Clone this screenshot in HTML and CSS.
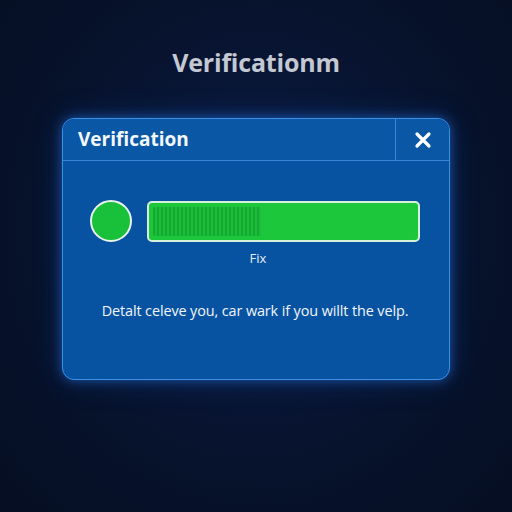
FILE: index.html
```html
<!DOCTYPE html>
<html lang="en">

<head>
  <meta charset="UTF-8">
  <meta name="viewport" content="width=device-width, initial-scale=1.0">
  <title>Verification</title>
  <link rel="stylesheet" href="styles.css">
</head>

<body>
  <div class="page">
    <h1 class="page-title">Verificationm</h1>

    <div class="dialog">
      <div class="dialog-header">
        <h2>Verification</h2>
        <button class="close-btn" aria-label="Close">
          <svg width="18" height="18" viewBox="0 0 18 18">
            <path d="M3 3 L15 15 M15 3 L3 15" stroke="#ffffff" stroke-width="3.2" stroke-linecap="round" />
          </svg>
        </button>
      </div>

      <div class="dialog-body">
        <div class="progress-row">
          <div class="status-dot"></div>
          <div class="progress-bar">
            <div class="progress-fill"></div>
          </div>
        </div>
        <p class="progress-label">Fix</p>
        <p class="dialog-text">Detalt celeve you, car wark if you willt the velp.</p>
      </div>
    </div>
  </div>
</body>

</html>
```

FILE: styles.css
```css
html, body {
  margin: 0;
  height: 100%;
}

body {
  font-family: "Open Sans", "Liberation Sans", sans-serif;
  background: radial-gradient(ellipse at 50% 45%, #0b1c44 0%, #07122c 60%, #050e22 100%);
  color: white;
}

.page {
  display: flex;
  flex-direction: column;
  align-items: center;
  padding-top: 44px;
}

.page-title {
  margin: 0;
  font-size: 25px;
  font-weight: 700;
  color: #c3c8d3;
  letter-spacing: -0.2px;
  line-height: 36px;
}

.dialog {
  margin-top: 38px;
  width: 386px;
  height: 260px;
  background: #0853a1;
  border: 1px solid #3d8fe6;
  border-radius: 12px;
  box-shadow: 0 0 12px rgba(40, 130, 240, 0.55), 0 0 30px rgba(20, 90, 200, 0.3);
  overflow: hidden;
}

.dialog-header {
  display: flex;
  align-items: stretch;
  height: 41px;
  border-bottom: 1px solid #3a87d8;
  background: #0a57a6;
}

.dialog-header h2 {
  flex: 1;
  margin: 0;
  padding-left: 15px;
  font-size: 19px;
  font-weight: 700;
  line-height: 41px;
  color: #f4f7fb;
}

.close-btn {
  width: 54px;
  border: none;
  border-left: 1px solid #3a87d8;
  background: transparent;
  display: flex;
  align-items: center;
  justify-content: center;
  padding: 0;
  cursor: pointer;
}

.dialog-body {
  padding: 39px 29px 0 27px;
}

.progress-row {
  display: flex;
  align-items: center;
  gap: 15px;
}

.status-dot {
  width: 42px;
  height: 42px;
  border-radius: 50%;
  background: #19c13a;
  border: 2px solid #e8f4ea;
  box-sizing: border-box;
}

.progress-bar {
  flex: 1;
  height: 41px;
  background: #1cc73c;
  border: 2px solid #d6f0dc;
  border-radius: 5px;
  box-sizing: border-box;
  padding: 4px;
}

.progress-fill {
  width: 108px;
  height: 100%;
  background: repeating-linear-gradient(90deg, #14a932 0 2px, #1bbd39 2px 4px);
  border-radius: 2px;
}

.progress-label {
  margin: 7px 0 0;
  text-align: center;
  font-size: 13px;
  color: #e4ebf5;
  padding-left: 6px;
}

.dialog-text {
  margin: 34px 0 0;
  text-align: center;
  font-size: 14.4px;
  color: #f2f5fa;
  letter-spacing: -0.1px;
}
```
